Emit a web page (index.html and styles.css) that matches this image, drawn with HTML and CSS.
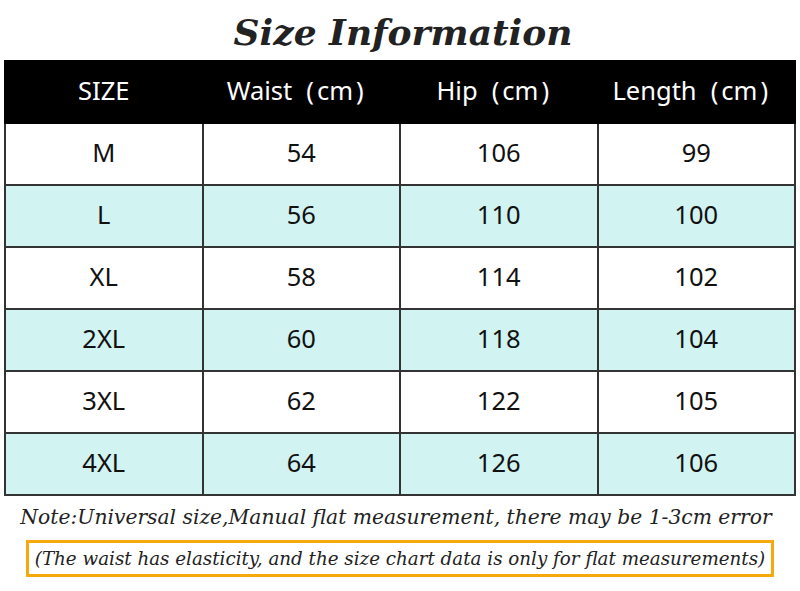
FILE: index.html
```html
<!DOCTYPE html>
<html>
<head>
<meta charset="utf-8">
<link rel="stylesheet" href="styles.css">
</head>
<body>
<div class="page">
  <h1 class="title">Size Information</h1>
  <table class="chart">
    <thead>
      <tr><th>SIZE</th><th>Waist<span class="unit">(<span class="cm">cm</span>)</span></th><th>Hip<span class="unit">(<span class="cm">cm</span>)</span></th><th>Length<span class="unit">(<span class="cm">cm</span>)</span></th></tr>
    </thead>
    <tbody>
      <tr><td>M</td><td>54</td><td>106</td><td>99</td></tr>
      <tr class="alt"><td>L</td><td>56</td><td>110</td><td>100</td></tr>
      <tr><td>XL</td><td>58</td><td>114</td><td>102</td></tr>
      <tr class="alt"><td>2XL</td><td>60</td><td>118</td><td>104</td></tr>
      <tr><td>3XL</td><td>62</td><td>122</td><td>105</td></tr>
      <tr class="alt"><td>4XL</td><td>64</td><td>126</td><td>106</td></tr>
    </tbody>
  </table>
  <p class="note">Note:Universal size,Manual flat measurement, there may be 1-3cm error</p>
  <div class="box">(The waist has elasticity, and the size chart data is only for flat measurements)</div>
</div>
</body>
</html>
```
FILE: styles.css
```css
html, body {
  margin: 0;
  padding: 0;
  background: #fff;
}
.page {
  width: 800px;
  height: 591px;
  display: flex;
  flex-direction: column;
  align-items: center;
}
.title {
  margin: 0;
  height: 60px;
  line-height: 64px;
  font-family: "DejaVu Serif", serif;
  font-style: italic;
  font-weight: bold;
  font-size: 36px;
  color: #222;
  padding-left: 6px;
}
.chart {
  width: 792px;
  border-collapse: collapse;
  table-layout: fixed;
  font-family: "Noto Sans", sans-serif;
  font-size: 25.5px;
  color: #111;
}
.chart th, .chart td {
  height: 62px;
  padding: 0 0 4px 0;
  text-align: center;
  border: 2px solid #333;
  box-sizing: border-box;
}
.chart th {
  background: #000;
  color: #fff;
  font-weight: normal;
  border-color: #000;
  border-left-color: #333;
}
.chart th:first-child {
  border-left-color: #000;
}
.unit {
  margin-left: 14px;
  padding-right: 12px;
}
.cm {
  margin: 0 3px;
}
.chart td {
  background: #fff;
}
.chart tr.alt td {
  background: #d1f3f1;
}
.note {
  margin: 9px 0 0 0;
  padding-right: 8px;
  font-family: "DejaVu Serif", serif;
  font-style: italic;
  font-size: 20.3px;
  color: #222;
  white-space: nowrap;
}
.box {
  margin-top: 11px;
  border: 3px solid #f5a90a;
  padding: 5px 6px;
  font-family: "DejaVu Serif", serif;
  font-style: italic;
  font-size: 18.3px;
  color: #222;
  white-space: nowrap;
}
```
